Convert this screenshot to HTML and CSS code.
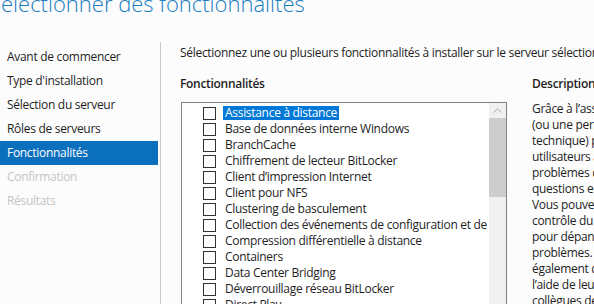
FILE: index.html
```html
<!DOCTYPE html>
<html lang="fr">
<head>
    <meta charset="UTF-8">
    <title>Assistant Ajout de rôles et de fonctionnalités</title>
    <link rel="stylesheet" href="styles.css">
</head>
<body>
    <header class="title-bar">
        <h1>Sélectionner des fonctionnalités</h1>
    </header>
    <div class="wizard">
        <nav class="steps">
            <div class="step">Avant de commencer</div>
            <div class="step">Type d'installation</div>
            <div class="step">Sélection du serveur</div>
            <div class="step">Rôles de serveurs</div>
            <div class="step active">Fonctionnalités</div>
            <div class="step disabled">Confirmation</div>
            <div class="step disabled">Résultats</div>
        </nav>
        <main class="content">
            <p class="intro">Sélectionnez une ou plusieurs fonctionnalités à installer sur le serveur sélectionné.</p>
            <div class="columns">
                <section class="features">
                    <h2>Fonctionnalités</h2>
                    <div class="listbox">
                        <ul class="feature-list">
                            <li><span class="check"></span><span class="label selected">Assistance à distance</span></li>
                            <li><span class="check"></span><span class="label">Base de données interne Windows</span></li>
                            <li><span class="check"></span><span class="label">BranchCache</span></li>
                            <li><span class="check"></span><span class="label">Chiffrement de lecteur BitLocker</span></li>
                            <li><span class="check"></span><span class="label">Client d’impression Internet</span></li>
                            <li><span class="check"></span><span class="label">Client pour NFS</span></li>
                            <li><span class="check"></span><span class="label">Clustering de basculement</span></li>
                            <li><span class="check"></span><span class="label">Collection des événements de configuration et de démarrage</span></li>
                            <li><span class="check"></span><span class="label">Compression différentielle à distance</span></li>
                            <li><span class="check"></span><span class="label">Containers</span></li>
                            <li><span class="check"></span><span class="label">Data Center Bridging</span></li>
                            <li><span class="check"></span><span class="label">Déverrouillage réseau BitLocker</span></li>
                            <li><span class="check"></span><span class="label">Direct Play</span></li>
                        </ul>
                        <div class="scrollbar">
                            <div class="scroll-up">
                                <svg width="9" height="5" viewBox="0 0 9 5"><path d="M0.5 4.5 L4.5 0.8 L8.5 4.5" fill="none" stroke="#a6a6a6" stroke-width="1"/></svg>
                            </div>
                            <div class="scroll-thumb"></div>
                        </div>
                    </div>
                </section>
                <section class="description">
                    <h2>Description</h2>
                    <p>Grâce à l’assistance à distance, vous<br>
                    (ou une personne du support<br>
                    technique) pouvez proposer de l’aide aux<br>
                    utilisateurs ayant des<br>
                    problèmes de PC ou des<br>
                    questions en ligne.<br>
                    Vous pouvez afficher et prendre le<br>
                    contrôle du bureau de l’utilisateur<br>
                    pour dépanner et résoudre les<br>
                    problèmes. Les utilisateurs peuvent<br>
                    également demander de<br>
                    l’aide de leurs amis ou<br>
                    collègues de travail.</p>
                </section>
            </div>
        </main>
    </div>
</body>
</html>
```
FILE: styles.css
```css
body {
    margin: 0;
    background-color: #fcfcfc;
    font-family: "Open Sans", "Noto Sans", sans-serif;
    font-size: 12px;
    letter-spacing: -0.3px;
    color: #1e1e1e;
    overflow: hidden;
}
.title-bar {
    height: 42px;
    overflow: hidden;
}
.title-bar h1 {
    margin: -12px 0 0 -11px;
    font-size: 22px;
    font-weight: 300;
    letter-spacing: 0;
    color: #1a7dbf;
    white-space: nowrap;
    line-height: 30px;
}
.wizard {
    display: flex;
}
.steps {
    width: 160px;
    flex-shrink: 0;
    padding-top: 3px;
    border-right: 1px solid #c8c8c8;
    height: 270px;
}
.step {
    height: 24px;
    line-height: 24px;
    padding-left: 7px;
    margin-right: 2px;
    white-space: nowrap;
}
.step.active {
    background-color: #0a6fbd;
    color: white;
}
.step.disabled {
    color: #c4c4c4;
}
.content {
    padding: 3px 0 0 19px;
    white-space: nowrap;
}
.intro {
    margin: 0;
    line-height: 16px;
}
.columns {
    display: flex;
    margin-top: 15px;
}
h2 {
    margin: 0;
    font-size: 12px;
    font-weight: 600;
    line-height: 16px;
}
.features {
    width: 327px;
}
.features h2 {
    margin-bottom: 10px;
}
.listbox {
    display: flex;
    margin-left: 1px;
    height: 220px;
    border: 1px solid #828282;
    background-color: white;
}
.feature-list {
    flex: 1;
    list-style: none;
    margin: 0;
    padding: 2px 0 0 0;
    overflow: hidden;
}
.feature-list li {
    display: flex;
    align-items: center;
    height: 16px;
}
.check {
    width: 11px;
    height: 11px;
    margin-left: 21px;
    margin-right: 7px;
    border: 1px solid #333;
    background-color: white;
    flex-shrink: 0;
}
.label {
    padding: 0 2px;
    line-height: 14px;
}
.label.selected {
    background-color: #0078d7;
    color: white;
}
.scrollbar {
    width: 17px;
    flex-shrink: 0;
    background-color: #f0f0f0;
}
.scroll-up {
    height: 15px;
    display: flex;
    align-items: center;
    justify-content: center;
}
.scroll-thumb {
    height: 79px;
    background-color: #cdcdcd;
}
.description {
    margin-left: 25px;
}
.description h2 {
    margin-bottom: 9px;
}
.description p {
    margin: 0;
    line-height: 16px;
}
```
